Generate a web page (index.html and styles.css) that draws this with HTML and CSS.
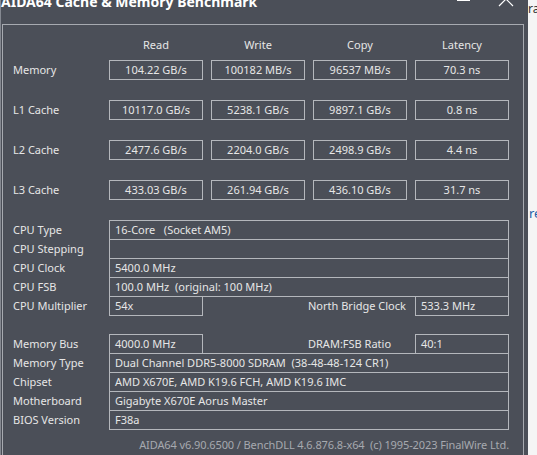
FILE: index.html
```html
<!DOCTYPE html>
<html>
<head>
<meta charset="utf-8">
<link rel="stylesheet" href="styles.css">
</head>
<body>
<div class="desk">
  <div class="win">
    <div class="titlebar">
      <span class="title">AIDA64 Cache &amp; Memory Benchmark</span>
      <span class="min"></span>
      <svg class="close" width="16" height="16" viewBox="0 0 16 16"><path d="M1 1L15 15M15 1L1 15" stroke="#ffffff" stroke-width="1.2" fill="none"/></svg>
    </div>
    <div class="panel">
      <div class="bench-head">
        <span></span><span>Read</span><span>Write</span><span>Copy</span><span>Latency</span>
      </div>
      <div class="bench">
        <span class="lbl">Memory</span><span class="val">104.22 GB/s</span><span class="val">100182 MB/s</span><span class="val">96537 MB/s</span><span class="val">70.3 ns</span>
        <span class="lbl">L1 Cache</span><span class="val">10117.0 GB/s</span><span class="val">5238.1 GB/s</span><span class="val">9897.1 GB/s</span><span class="val">0.8 ns</span>
        <span class="lbl">L2 Cache</span><span class="val">2477.6 GB/s</span><span class="val">2204.0 GB/s</span><span class="val">2498.9 GB/s</span><span class="val">4.4 ns</span>
        <span class="lbl">L3 Cache</span><span class="val">433.03 GB/s</span><span class="val">261.94 GB/s</span><span class="val">436.10 GB/s</span><span class="val">31.7 ns</span>
      </div>
      <div class="info">
        <div class="irow"><span class="lbl">CPU Type</span><span class="box full">16-Core   (Socket AM5)</span></div>
        <div class="irow"><span class="lbl">CPU Stepping</span><span class="box full"></span></div>
        <div class="irow"><span class="lbl">CPU Clock</span><span class="box full">5400.0 MHz</span></div>
        <div class="irow"><span class="lbl">CPU FSB</span><span class="box full">100.0 MHz  (original: 100 MHz)</span></div>
        <div class="irow"><span class="lbl">CPU Multiplier</span><span class="box small">54x</span><span class="lbl2">North Bridge Clock</span><span class="box small">533.3 MHz</span></div>
        <div class="irow"></div>
        <div class="irow"><span class="lbl">Memory Bus</span><span class="box small">4000.0 MHz</span><span class="lbl2">DRAM:FSB Ratio</span><span class="box small">40:1</span></div>
        <div class="irow"><span class="lbl">Memory Type</span><span class="box full">Dual Channel DDR5-8000 SDRAM  (38-48-48-124 CR1)</span></div>
        <div class="irow"><span class="lbl">Chipset</span><span class="box full">AMD X670E, AMD K19.6 FCH, AMD K19.6 IMC</span></div>
        <div class="irow"><span class="lbl">Motherboard</span><span class="box full">Gigabyte X670E Aorus Master</span></div>
        <div class="irow"><span class="lbl">BIOS Version</span><span class="box full">F38a</span></div>
      </div>
      <div class="footer">AIDA64 v6.90.6500 / BenchDLL 4.6.876.8-x64  (c) 1995-2023 FinalWire Ltd.</div>
    </div>
  </div>
  <div class="other">
    <span class="o1">ra</span>
    <span class="o2">re</span>
  </div>
</div>
</body>
</html>
```

FILE: styles.css
```css
* { box-sizing: border-box; margin: 0; padding: 0; }
html, body { width: 537px; height: 455px; overflow: hidden; }
body {
  background: #4b4f58;
  font-family: "Noto Sans", "DejaVu Sans", sans-serif;
  font-size: 11px;
  color: #e6e6e6;
}
.desk { display: flex; height: 455px; }
.win {
  width: 528px;
  flex: none;
  background: #4b4f58;
  border-left: 1px solid #858991;
  display: flex;
  flex-direction: column;
}
.titlebar { height: 24px; flex: none; position: relative; }
.title {
  display: block;
  font-weight: 700;
  font-size: 14px;
  line-height: 14px;
  margin-top: -5px;
  color: #ffffff;
  white-space: nowrap;
}
.min {
  position: absolute;
  left: 456px;
  top: 0;
  width: 13px;
  height: 1px;
  background: #ffffff;
}
.close { position: absolute; left: 497px; top: -9px; }
.panel {
  margin-left: 1px;
  width: 522px;
  flex: 1;
  border: 1px solid #a7aab0;
  border-bottom: none;
  padding: 12px 0 0 10px;
}
.bench-head, .bench {
  display: grid;
  grid-template-columns: 88px repeat(4, 94px);
  column-gap: 8px;
}
.bench-head { height: 16px; line-height: 16px; margin-bottom: 7px; text-align: center; }
.bench { grid-auto-rows: 20px; row-gap: 20px; }
.lbl { line-height: 20px; white-space: nowrap; }
.val {
  border: 1px solid #b4b7bc;
  text-align: center;
  line-height: 18px;
  white-space: nowrap;
}
.info { margin-top: 20px; }
.irow { display: flex; height: 19px; }
.irow .lbl { width: 96px; flex: none; line-height: 19px; }
.box {
  height: 20px;
  border: 1px solid #b4b7bc;
  line-height: 18px;
  padding-left: 5px;
  white-space: pre;
  flex: none;
}
.box.full { width: 400px; }
.box.small { width: 94px; }
.lbl2 { width: 107px; margin-left: 105px; line-height: 19px; white-space: nowrap; flex: none; }
.footer {
  width: 496px;
  margin-top: 8px;
  line-height: 16px;
  text-align: right;
  color: #a6a9af;
  white-space: pre;
  letter-spacing: -0.1px;
}
.other {
  flex: 1;
  background: #f5f5f5;
  position: relative;
  font-size: 12px;
}
.o1 { position: absolute; left: 0; top: 3px; color: #333; line-height: 12px; }
.o2 { position: absolute; left: 1px; top: 206px; color: #1f5fa8; font-size: 13px; line-height: 14px; }
```
